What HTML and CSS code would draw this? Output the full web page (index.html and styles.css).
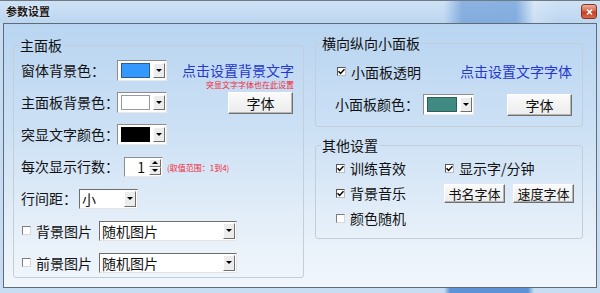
FILE: index.html
```html
<!DOCTYPE html>
<html lang="zh-CN">
<head>
<meta charset="utf-8">
<title>参数设置</title>
<link rel="stylesheet" href="styles.css">
</head>
<body>
<div class="win">
  <div class="titlebar">
    <span class="title">参数设置</span>
    <span class="close"><svg width="7" height="6" viewBox="0 0 7 6"><path d="M1 0.5 L6 5.5 M6 0.5 L1 5.5" stroke="#fff" stroke-width="1.6"/></svg></span>
  </div>
  <div class="client">
    <fieldset class="group main">
      <legend>主面板</legend>
      <div class="main-body">
        <div class="row">
          <span class="lbl">窗体背景色：</span>
          <span class="ccombo"><span class="sw sw-blue"></span><span class="arr"><i class="tri"></i></span></span>
          <div class="linkcol">
            <span class="link">点击设置背景文字</span>
            <span class="note">突显文字字体也在此设置</span>
          </div>
        </div>
        <div class="row">
          <span class="lbl">主面板背景色：</span>
          <span class="ccombo"><span class="sw sw-white"></span><span class="arr"><i class="tri"></i></span></span>
          <span class="btn btn-font push">字体</span>
        </div>
        <div class="row">
          <span class="lbl">突显文字颜色：</span>
          <span class="ccombo"><span class="sw sw-black"></span><span class="arr"><i class="tri"></i></span></span>
        </div>
        <div class="row">
          <span class="lbl lbl-wide">每次显示行数：</span>
          <span class="spin"><span class="spin-val">1</span><span class="spin-btns"><span class="sb"><i class="tri-up"></i></span><span class="sb"><i class="tri"></i></span></span></span>
          <span class="note note-range">(取值范围：1到4)</span>
        </div>
        <div class="row">
          <span class="lbl lbl-short">行间距：</span>
          <span class="combo combo-small"><span class="combo-val">小</span><span class="arr"><i class="tri"></i></span></span>
        </div>
        <div class="row">
          <span class="chk"></span>
          <span class="chk-lbl">背景图片</span>
          <span class="combo combo-wide"><span class="combo-val">随机图片</span><span class="arr"><i class="tri"></i></span></span>
        </div>
        <div class="row">
          <span class="chk"></span>
          <span class="chk-lbl">前景图片</span>
          <span class="combo combo-wide"><span class="combo-val">随机图片</span><span class="arr"><i class="tri"></i></span></span>
        </div>
      </div>
    </fieldset>
    <div class="rightcol">
      <fieldset class="group small-panel">
        <legend>横向纵向小面板</legend>
        <div class="sp-body">
          <div class="row">
            <span class="chk chk-on chk-first"><svg width="7" height="7" viewBox="0 0 7 7"><path d="M0.5 3.2 L2.6 5.4 L6.5 1.2" fill="none" stroke="#000" stroke-width="1.5"/></svg></span>
            <span class="chk-lbl">小面板透明</span>
            <span class="link push">点击设置文字字体</span>
          </div>
          <div class="row">
            <span class="lbl lbl-sp">小面板颜色：</span>
            <span class="ccombo ccombo-sp"><span class="sw sw-teal"></span><span class="arr"><i class="tri"></i></span></span>
            <span class="btn btn-font push">字体</span>
          </div>
        </div>
      </fieldset>
      <fieldset class="group other">
        <legend>其他设置</legend>
        <div class="other-body">
          <div class="cell">
            <span class="chk chk-on"><svg width="7" height="7" viewBox="0 0 7 7"><path d="M0.5 3.2 L2.6 5.4 L6.5 1.2" fill="none" stroke="#000" stroke-width="1.5"/></svg></span>
            <span class="chk-lbl">训练音效</span>
          </div>
          <div class="cell cell-2">
            <span class="chk chk-on"><svg width="7" height="7" viewBox="0 0 7 7"><path d="M0.5 3.2 L2.6 5.4 L6.5 1.2" fill="none" stroke="#000" stroke-width="1.5"/></svg></span>
            <span class="chk-lbl">显示字/分钟</span>
          </div>
          <div class="cell">
            <span class="chk chk-on"><svg width="7" height="7" viewBox="0 0 7 7"><path d="M0.5 3.2 L2.6 5.4 L6.5 1.2" fill="none" stroke="#000" stroke-width="1.5"/></svg></span>
            <span class="chk-lbl">背景音乐</span>
          </div>
          <div class="cell cell-btns">
            <span class="btn btn-sm">书名字体</span>
            <span class="btn btn-sm">速度字体</span>
          </div>
          <div class="cell">
            <span class="chk"></span>
            <span class="chk-lbl">颜色随机</span>
          </div>
        </div>
      </fieldset>
    </div>
  </div>
  <div class="bottomframe"></div>
</div>
</body>
</html>
```

FILE: styles.css
```css
* { box-sizing: border-box; }
html, body { margin: 0; padding: 0; }
body {
  width: 600px;
  height: 293px;
  overflow: hidden;
  background: #c6dcf2;
  font-family: "Noto Sans CJK SC", "Noto Sans", sans-serif;
  font-size: 14px;
  color: #111;
}
.win { width: 600px; height: 293px; display: flex; flex-direction: column; }

.titlebar {
  height: 23px;
  flex: none;
  display: flex;
  align-items: flex-start;
  padding: 0 3px 0 6px;
  border-top: 1px solid #6d7a88;
  background:
    linear-gradient(to right, rgba(255,255,255,0) 0%, rgba(255,255,255,0) 74%, rgba(60,120,200,0.45) 77%, rgba(70,130,205,0.5) 86%, rgba(255,255,255,0.2) 89%, rgba(255,255,255,0) 93%),
    linear-gradient(#cfe2f5, #bcd6f0);
}
.title {
  font-size: 11px;
  font-weight: bold;
  line-height: 13px;
  margin-top: 4px;
  color: #1b1b1b;
  text-shadow: 0 0 3px rgba(255,255,255,0.9);
}
.close {
  margin-left: auto;
  margin-top: 3px;
  width: 16px;
  height: 15px;
  border: 1px solid #8a3320;
  border-radius: 3px;
  background: linear-gradient(#eab1a1, #d8674a 45%, #c43f20 55%, #d5694c);
  display: flex;
  align-items: center;
  justify-content: center;
}

.client {
  flex: none;
  height: 265px;
  margin: 0 3px;
  border: 1px solid #5f6b77;
  background: linear-gradient(#b9d5f1 0%, #cfe2f5 45%, #e7f0f9 80%, #f1f6fc 100%);
  display: grid;
  grid-template-columns: 291px 268px;
  column-gap: 11px;
  align-items: start;
  padding: 11px 0 0 9px;
}
.bottomframe {
  flex: 1;
  background: linear-gradient(to right, #c8ddf2 0%, #c8ddf2 74%, #5d93d6 75%, #5d93d6 88%, #c8ddf2 89%);
}

.group {
  margin: 0;
  padding: 0;
  border: 1px solid #c4ced8;
  border-radius: 3px;
  min-width: 0;
}
.group legend {
  margin-left: 5px;
  padding: 0 1px;
  font-size: 14px;
  line-height: 16px;
  color: #111;
}

.main { margin-top: 2px; }
.main-body {
  padding: 7px 10px 4px 6px;
  display: flex;
  flex-direction: column;
  gap: 11px;
}
.row {
  height: 21px;
  display: flex;
  align-items: center;
  white-space: nowrap;
}
.lbl { flex: none; width: 97px; line-height: 21px; padding-left: 1px; }
.lbl-wide { width: 104px; }
.lbl-short { width: 59px; }
.lbl-sp { width: 88px; padding-left: 0; }
.push { margin-left: auto; }

.ccombo {
  flex: none;
  width: 50px;
  height: 21px;
  display: flex;
  align-items: stretch;
  gap: 3px;
  padding: 2px 1px 2px 3px;
  background: #fff;
  border: 1px solid;
  border-color: #8e8e8e #e9e9e9 #e9e9e9 #8e8e8e;
}
.ccombo-sp { width: 51px; }
.sw { flex: 1; border: 1px solid #555; }
.sw-blue { background: #3399ff; border-color: #2b5d92; }
.sw-white { background: #fff; border-color: #9a9a9a; }
.sw-black { background: #000; border-color: #000; }
.sw-teal { background: #3f8b83; border-color: #2d5e58; }

.arr {
  flex: none;
  width: 12px;
  display: flex;
  align-items: center;
  justify-content: center;
  background: #ececec;
  border: 1px solid;
  border-color: #fff #6e6e6e #6e6e6e #fff;
}
.tri {
  display: block;
  width: 0;
  height: 0;
  border-left: 3px solid transparent;
  border-right: 3px solid transparent;
  border-top: 3px solid #000;
}
.tri-up {
  display: block;
  width: 0;
  height: 0;
  border-left: 3px solid transparent;
  border-right: 3px solid transparent;
  border-bottom: 3px solid #000;
}

.linkcol {
  margin-left: 15px;
  display: flex;
  flex-direction: column;
  align-items: flex-end;
  height: 21px;
}
.link { color: #2437d0; line-height: 21px; font-size: 14px; }
.note {
  color: #f2283a;
  font-size: 8px;
  line-height: 10px;
  margin-top: -1px;
}
.note-range { margin-left: 4px; margin-top: 2px; }

.btn {
  flex: none;
  display: flex;
  align-items: center;
  justify-content: center;
  background: linear-gradient(#fafafa, #ececec);
  border: 1px solid;
  border-color: #ffffff #707070 #707070 #ffffff;
  box-shadow: inset -1px -1px 0 #b4b4b4;
  color: #111;
}
.btn-font { width: 65px; height: 22px; font-size: 14px; }
.btn-sm { width: 61px; height: 19px; font-size: 13px; }

.spin {
  flex: none;
  width: 39px;
  height: 20px;
  display: flex;
  background: #fff;
  border: 1px solid;
  border-color: #8e8e8e #e9e9e9 #e9e9e9 #8e8e8e;
  padding: 1px 1px 1px 0;
}
.spin-val { flex: 1; text-align: right; padding-right: 4px; line-height: 16px; font-size: 14px; }
.spin-btns { width: 12px; display: flex; flex-direction: column; }
.sb {
  flex: 1;
  display: flex;
  align-items: center;
  justify-content: center;
  background: #ececec;
  border: 1px solid;
  border-color: #fff #6e6e6e #6e6e6e #fff;
}

.combo {
  flex: none;
  height: 20px;
  display: flex;
  background: #fff;
  border: 1px solid;
  border-color: #6e6e6e #e4e4e4 #e4e4e4 #6e6e6e;
  padding: 1px 1px 1px 2px;
}
.combo-small { width: 59px; }
.combo-wide { width: 138px; margin-left: 7px; }
.combo-val { flex: 1; line-height: 16px; font-size: 14px; }

.chk {
  flex: none;
  width: 9px;
  height: 9px;
  background: #fff;
  border: 1px solid;
  border-color: #7c7c7c #d8d8d8 #d8d8d8 #7c7c7c;
  display: flex;
  align-items: center;
  justify-content: center;
  margin-left: 2px;
}
.chk-on { border-color: #555 #bbb #bbb #555; }
.chk-lbl { margin-left: 5px; line-height: 20px; }

.rightcol { display: flex; flex-direction: column; }
.sp-body {
  padding: 10px 10px 11px 19px;
  display: flex;
  flex-direction: column;
  gap: 12px;
}
.chk-first { margin-left: 2px; }

.other { margin-top: 10px; }
.other-body {
  padding: 5px 8px 10px 20px;
  display: grid;
  grid-template-columns: 108px auto;
  grid-template-rows: 20px 20px 20px;
  row-gap: 5px;
  white-space: nowrap;
}
.cell { display: flex; align-items: center; }
.other-body .chk { margin-left: 0; }
.cell-2 .chk { margin-left: 1px; }
.cell-btns { gap: 8px; }
```
